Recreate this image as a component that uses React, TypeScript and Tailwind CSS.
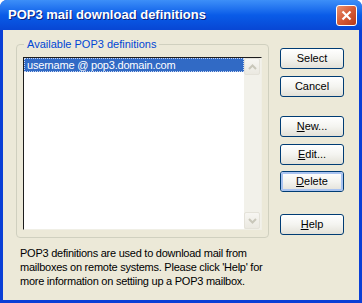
import React from 'react'

const ui = { fontFamily: '"Liberation Sans", Arial, sans-serif' }

function XpButton({ label, u, focused }: { label: string; u?: number; focused?: boolean }) {
  // u = index of the underlined access key
  const text =
    u === undefined ? (
      label
    ) : (
      <>
        {label.slice(0, u)}
        <span className="underline underline-offset-[1px]">{label[u]}</span>
        {label.slice(u + 1)}
      </>
    )
  return (
    <button
      className="w-[64px] h-[21px] rounded-[3px] border border-[#003c74] bg-gradient-to-b from-white via-[#f4f4f0] to-[#e3e1d8] text-[11px] text-black flex items-center justify-center"
      style={ui}
    >
      <span
        className={
          focused
            ? 'w-full h-full rounded-[2px] border-2 border-[#a9c3f0] flex items-center justify-center'
            : 'w-full h-full flex items-center justify-center'
        }
      >
        {text}
      </span>
    </button>
  )
}

function Chevron({ up }: { up?: boolean }) {
  return (
    <svg width="9" height="6" viewBox="0 0 9 6">
      <path
        d={up ? 'M1 5 L4.5 1.5 L8 5' : 'M1 1 L4.5 4.5 L8 1'}
        fill="none"
        stroke="#c9c7ba"
        strokeWidth="2"
      />
    </svg>
  )
}

function ScrollButton({ up }: { up?: boolean }) {
  return (
    <div className="w-[16px] h-[17px] rounded-[2px] border border-[#e4e2d9] bg-gradient-to-b from-[#f7f6f2] to-[#ebe9e1] flex items-center justify-center">
      <Chevron up={up} />
    </div>
  )
}

export default function App() {
  return (
    <div className="w-[362px] h-[303px] flex flex-col bg-[#0a3fd6] rounded-t-[7px] overflow-hidden" style={ui}>
      {/* Title bar */}
      <div className="h-[30px] flex items-center justify-between pl-[8px] pr-[5px] bg-gradient-to-b from-[#3d8ff8] via-[#0a5ce8] to-[#0846d4]">
        <span className="text-white text-[13px] font-bold [text-shadow:1px_1px_0_#0a1f7a]">
          POP3 mail download definitions
        </span>
        <div className="w-[21px] h-[21px] rounded-[3px] border border-white bg-gradient-to-br from-[#e8916e] via-[#d55a36] to-[#b83a17] flex items-center justify-center">
          <svg width="11" height="11" viewBox="0 0 11 11">
            <path d="M1.5 1.5 L9.5 9.5 M9.5 1.5 L1.5 9.5" stroke="white" strokeWidth="2.2" />
          </svg>
        </div>
      </div>

      {/* Body */}
      <div className="flex-1 mx-[3px] mb-[3px] bg-[#ece9d8] flex flex-col">
        <div className="flex pt-[8px] pl-[13px]">
          <fieldset className="w-[253px] h-[200px] border border-[#d0d0bf] rounded-[4px] px-[6px] pb-[7px] pt-[6px] flex flex-col">
            <legend className="ml-[1px] px-[3px] text-[11px] leading-[13px] text-[#0046d5]">
              Available POP3 definitions
            </legend>
            <div className="flex-1 flex border border-t-[#1d1d1d] border-l-[#1d1d1d] border-r-[#f0efe6] border-b-[#f0efe6] bg-white">
              <div className="flex-1">
                <div className="h-[14px] bg-[#316ac5] text-white text-[11px] leading-[12px] pl-[2px] tracking-[-0.2px] border border-dotted border-[#c9d6f0]">
                  username @ pop3.domain.com
                </div>
              </div>
              <div className="w-[17px] flex flex-col justify-between bg-[#f2f1ea]">
                <ScrollButton up />
                <ScrollButton />
              </div>
            </div>
          </fieldset>

          <div className="ml-[11px] pt-[10px] flex flex-col">
            <XpButton label="Select" />
            <div className="h-[7px]" />
            <XpButton label="Cancel" />
            <div className="h-[19px]" />
            <XpButton label="New..." u={0} />
            <div className="h-[7px]" />
            <XpButton label="Edit..." u={0} />
            <div className="h-[6px]" />
            <XpButton label="Delete" u={0} focused />
            <div className="h-[22px]" />
            <XpButton label="Help" u={0} />
          </div>
        </div>

        <div className="pl-[17px] pt-[8px] text-[11px] leading-[14px] text-black tracking-[-0.25px]">
          <div>POP3 definitions are used to download mail from</div>
          <div>mailboxes on remote systems. Please click 'Help' for</div>
          <div>more information on settiing up a POP3 mailbox.</div>
        </div>
      </div>
    </div>
  )
}
